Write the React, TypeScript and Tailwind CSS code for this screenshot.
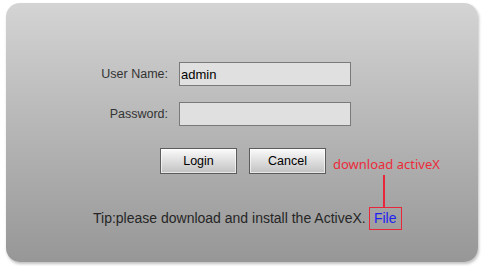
import React from 'react';

const App: React.FC = () => {
  return (
    <div className="w-[483px] h-[266px] bg-white pt-[3px] pl-[6px]">
      <div className="w-[472px] h-[259px] rounded-[14px] bg-gradient-to-b from-[#d4d4d4] to-[#979797] shadow-[1px_2px_3px_rgba(0,0,0,0.25)] pt-[59px] font-['Liberation_Sans',Arial,sans-serif]">
        <div className="flex items-center">
          <label className="w-[162px] text-right text-[12.5px] text-[#333]">User Name:</label>
          <input
            className="ml-[11px] w-[172px] h-[24px] border border-[#7a7a7a] bg-[#e0e0e0] px-[1px] text-[13px] text-black outline-none"
            defaultValue="admin"
          />
        </div>
        <div className="flex items-center mt-[16px]">
          <label className="w-[162px] text-right text-[12.5px] text-[#333]">Password:</label>
          <input
            type="password"
            className="ml-[11px] w-[172px] h-[24px] border border-[#7a7a7a] bg-[#e0e0e0] px-[1px] text-[13px] outline-none"
          />
        </div>
        <div className="flex items-start mt-[22px] ml-[154px]">
          <button className="w-[77px] h-[26px] border border-[#5c5c5c] bg-gradient-to-b from-[#fbfbfb] to-[#c2c2c2] shadow-[inset_0_0_0_1px_rgba(255,255,255,0.6)] text-[12.5px] text-black">
            Login
          </button>
          <button className="ml-[12px] w-[77px] h-[26px] border border-[#5c5c5c] bg-gradient-to-b from-[#fbfbfb] to-[#c2c2c2] shadow-[inset_0_0_0_1px_rgba(255,255,255,0.6)] text-[12.5px] text-black">
            Cancel
          </button>
          <span className="ml-[7px] mt-[7px] leading-[18px] text-[13px] text-[#ec2a3a] font-['Noto_Sans',sans-serif]">
            download activeX
          </span>
        </div>
        <div className="flex items-center mt-[33px] ml-[87px] text-[14px] text-[#262626]">
          <span>Tip:please download and install the ActiveX.</span>
          <span className="relative ml-[3px] h-[23px] w-[33px] justify-center border-[1.5px] border-[#e8283a] flex items-center text-[#1f1ff2]">
            File
            <span className="absolute bottom-full left-[13px] w-[2px] h-[33px] bg-[#e8283a]" />
          </span>
        </div>
      </div>
    </div>
  );
};

export default App;
